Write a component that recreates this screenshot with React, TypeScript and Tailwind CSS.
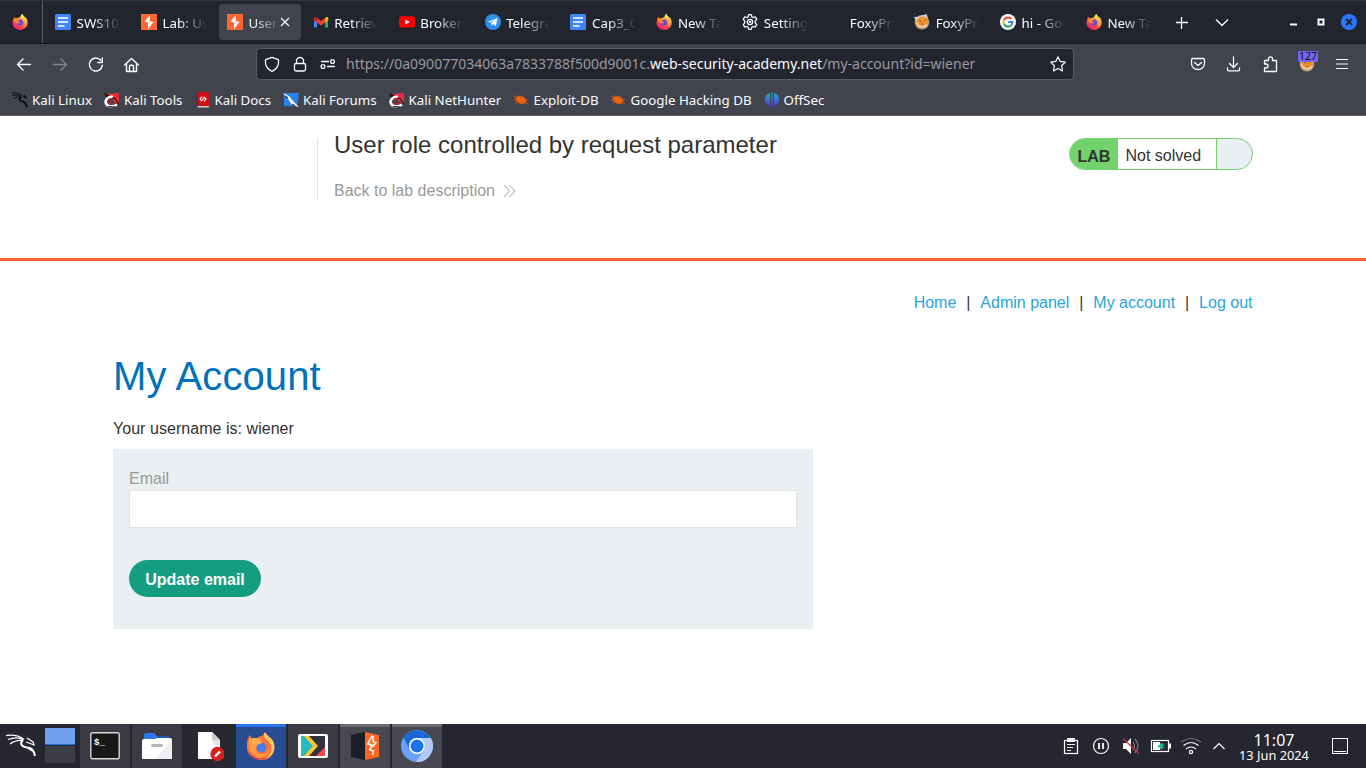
import React from "react";

type IconProps = { size?: number };

const Firefox = ({ size = 16 }: IconProps) => (
  <svg width={size} height={size} viewBox="0 0 32 32" className="shrink-0">
    <defs>
      <linearGradient id="ffBody" x1="0.85" y1="0.05" x2="0.2" y2="0.95">
        <stop offset="0" stopColor="#fff44f" />
        <stop offset="0.35" stopColor="#ffa436" />
        <stop offset="0.65" stopColor="#ff4a3f" />
        <stop offset="1" stopColor="#e81b80" />
      </linearGradient>
      <linearGradient id="ffFlame" x1="0.5" y1="0" x2="0.6" y2="1">
        <stop offset="0" stopColor="#fff44f" />
        <stop offset="1" stopColor="#ff8a1e" />
      </linearGradient>
    </defs>
    <path d="M5 5c0 2 1 3 1.500 4 2-1 4-1.500 6-1C14 6 16 6 17 6c0-3 2-5 4-6 0 3 3 4 5 7 1 0 1-1 1-1 3 4 5 8 4 14-1 7-8 12-15 12S1 26 1 18C1 12 3 8 5 5z" fill="url(#ffBody)" />
    <circle cx="16" cy="17" r="6.500" fill="#7a42d8" />
    <path d="M4 10c3-2 8-2 12 1 0 2-4 2-5 4 2 1 4 0 5 2-2 2-5 3-8 1-3-2-4-5-4-8z" fill="#ff8a2b" />
    <path d="M21 0c0 3 4 5 6 9 3 6 1 12-5 15 3-5 3-10-2-13-3-2-4-8 1-11z" fill="url(#ffFlame)" />
  </svg>
);

const FirefoxLauncher = () => (
  <svg width="30" height="30" viewBox="0 0 30 30">
    <path d="M4 4c1 2 1 3 2 4l5-1c1-1 2-2 5-2l3-4c1 3 6 5 8 9 4 9-1 19-11 19S0 22 1 14C1 9 2 6 4 4z" fill="#ff7043" />
    <path d="M19 1c1 4 6 5 8 9 4 9-1 16-7 18 6-5 8-13 2-18-4-3-5-6-3-9z" fill="#ffcb55" />
    <path d="M3 9c5-3 9-1 13-1l-4 5c-2 1-3 5-1 8 4 4 10 2 12-3 1 6-4 9-9 9S3 22 3 14z" fill="#ff9a43" />
    <circle cx="15.500" cy="16.500" r="5" fill="#477fe8" />
    <path d="M3 8c5-2 9 0 13 3-1 3-5 1-5 4-3-1-6-4-8-7z" fill="#ffad48" />
    <path d="M3 19c3 8 12 11 20 6-5 5-18 6-20-6z" fill="#e53945" />
  </svg>
);

const Docs = () => (
  <svg width="16" height="16" viewBox="0 0 16 16" className="shrink-0">
    <rect width="16" height="16" rx="1.500" fill="#4285f4" />
    <path d="M3 4h10M3 8h10M3 12h6.500" stroke="#fff" strokeWidth="1.700" />
  </svg>
);

const Burp = () => (
  <svg width="16" height="16" viewBox="0 0 16 16" className="shrink-0">
    <rect width="16" height="16" fill="#ff6633" />
    <path d="M9 1L3.500 7.700l3.700.8v-1.700l1.800-.6zM7 15l5.500-7-3.700-.9v1.900L7 9.700z" fill="#fff" />
    <path d="M8 6.500v3" stroke="#fff" strokeWidth="1.400" />
  </svg>
);

const Gmail = () => (
  <svg width="16" height="16" viewBox="0 0 16 16" className="shrink-0">
    <path d="M1 4v9.500h3V6z" fill="#4285f4" />
    <path d="M12 6v7.500h3V4z" fill="#34a853" />
    <path d="M12 4.200l1-1c1-.8 2.300 0 2.300 1.300V6L12 8.500z" fill="#fbbc04" />
    <path d="M4 8.500V4l4 3 4-3v4.500l-4 3z" fill="#ea4335" />
    <path d="M.7 4.500C.7 3.200 2 2.400 3 3.200l1 .8v4.500L.7 6z" fill="#c5221f" />
  </svg>
);

const YouTube = () => (
  <svg width="16" height="16" viewBox="0 0 16 16" className="shrink-0">
    <rect y="2.200" width="16" height="11.400" rx="2.600" fill="#f00" />
    <path d="M6.300 5.500v5l4.500-2.500z" fill="#fff" />
  </svg>
);

const Telegram = () => (
  <svg width="16" height="16" viewBox="0 0 16 16" className="shrink-0">
    <circle cx="8" cy="8" r="8" fill="#2f8fea" />
    <path d="M3 7.800L12.400 4l-1.500 8.200-3-2.200-1.500 1.500-.3-2.600 4-3.500-5 3.200z" fill="#fff" />
  </svg>
);

const Gear = () => (
  <svg width="16" height="16" viewBox="0 0 16 16" className="shrink-0" fill="none" stroke="#fbfbfe" strokeWidth="1.300" strokeLinejoin="round">
    <path d="M6.700.7h2.600l.6 2.200 1.100.6 2.200-.7 1.600 2.500-1.600 1.900v1.600l1.600 1.900-1.600 2.500-2.200-.7-1.100.6-.6 2.200H6.700l-.6-2.200-1.100-.6-2.200.7-1.600-2.500 1.600-1.900V7.200L1.200 5.300l1.600-2.500 2.200.7 1.100-.6z" />
    <circle cx="8" cy="8" r="2.600" />
    <circle cx="8" cy="8" r=".5" />
  </svg>
);

const Foxy = () => (
  <svg width="16" height="16" viewBox="0 0 16 16" className="shrink-0">
    <circle cx="8" cy="8.300" r="7.300" fill="#b9a18a" />
    <path d="M0 3l5-.5L12.500 0l1.500 4-5-1-7 4z" fill="#cfd0d2" />
    <circle cx="8.200" cy="8" r="5.600" fill="#f3922f" />
    <path d="M2.500 8c1 5 7 6.500 10.500 2.500" stroke="#f8dfc0" strokeWidth="1.200" fill="none" />
    <path d="M5 6.500l2.500.8M9.500 7.500L12 5M7 10h2" stroke="#9a5c2a" strokeWidth="1" />
  </svg>
);

const Google = () => (
  <svg width="16" height="16" viewBox="0 0 16 16" className="shrink-0" fill="none" strokeWidth="2.100">
    <circle cx="8" cy="8" r="8" fill="#fff" />
    <path d="M11.300 4.900A4.500 4.500 0 0 0 4 6" stroke="#ea4335" />
    <path d="M4 5.900a4.500 4.500 0 0 0 0 4.200" stroke="#fbbc05" />
    <path d="M4 10a4.500 4.500 0 0 0 7 1.500" stroke="#34a853" />
    <path d="M8 8h4.500a4.400 4.400 0 0 1-1.500 3.500" stroke="#4285f4" />
  </svg>
);

const Blank = () => <span className="size-4 shrink-0" />;

const tabs: { label: string; Icon: React.ComponentType; active?: boolean }[] = [
  { label: "SWS101", Icon: Docs },
  { label: "Lab: User", Icon: Burp },
  { label: "User role", Icon: Burp, active: true },
  { label: "Retrievin", Icon: Gmail },
  { label: "Broken a", Icon: YouTube },
  { label: "Telegram", Icon: Telegram },
  { label: "Cap3_Gro", Icon: Docs },
  { label: "New Tab", Icon: Firefox },
  { label: "Settings", Icon: Gear },
  { label: "FoxyProxy", Icon: Blank },
  { label: "FoxyProxy", Icon: Foxy },
  { label: "hi - Goog", Icon: Google },
  { label: "New Tab", Icon: Firefox },
];

function TabStrip() {
  return (
    <div className="flex h-11 items-center border-t border-t-[#32344a] border-b border-b-[#16171d] bg-[#23252e]">
      <div className="flex h-full w-[43px] items-center justify-center border-r border-[#5b5c63] pr-[3px]">
        <Firefox />
      </div>
      <div className="ml-0.5 flex">
        {tabs.map(({ label, Icon, active }, i) => (
          <div key={i} className="w-[85.920px] px-[2px]">
            <div className={active ? "flex h-9 items-center rounded bg-[#42444d] pl-2" : "flex h-9 items-center pl-2"}>
              <Icon />
              <span
                className={
                  active
                    ? "ml-[5.600px] w-[28.400px] overflow-hidden pt-[3px] whitespace-nowrap [mask-image:linear-gradient(to_right,black_20%,transparent_110%)]"
                    : "ml-[5.600px] w-[44px] overflow-hidden pt-[3px] whitespace-nowrap [mask-image:linear-gradient(to_right,black_35%,transparent)]"
                }
              >
                {label}
              </span>
              {active && (
                <svg width="10" height="10" viewBox="0 0 10 10" className="ml-[3px] shrink-0" stroke="#fbfbfe" strokeWidth="1.200">
                  <path d="M1 1l8 8M9 1L1 9" />
                </svg>
              )}
            </div>
          </div>
        ))}
      </div>
      <svg width="204" height="42" viewBox="1162 1 204 42" className="shrink-0" fill="none" stroke="#fbfbfe" strokeWidth="1.300">
        <path d="M1176 22.500h12M1181.500 17v12M1216 19.500l6 6 6-6" />
        <path d="M1290 24.500h7" strokeWidth="2" />
        <rect x="1318.500" y="19.500" width="5" height="5" strokeWidth="2" />
        <circle cx="1349" cy="22" r="8" fill="#2777ff" stroke="none" />
        <path d="M1346 19l6 6M1352 19l-6 6" stroke="#20242e" strokeWidth="2" />
      </svg>
    </div>
  );
}

function Toolbar() {
  return (
    <div className="flex h-10 items-center">
      <svg width="256" height="40" viewBox="0 44 256 40" fill="none" stroke="#fbfbfe" strokeWidth="1.400" strokeLinecap="round" strokeLinejoin="round">
        <path d="M30.500 64.500h-13M23 59l-5.500 5.500L23 70" />
        <path d="M53.500 64.500h13M61 59l5.500 5.500L61 70" stroke="#85868c" />
        <path d="M100.800 60.300a6.500 6.500 0 1 0 1.500 5M102.300 58v4.500h-4.500" />
        <path d="M124.500 65l7-6.500 7 6.500M126.500 63.500v8h10v-8M129.500 71v-4a2 2 0 0 1 4 0v4" />
      </svg>
      <div className="flex h-8 w-[818px] items-center rounded border border-[#5b5d66] bg-[#23252e]">
        <svg width="86" height="30" viewBox="257 49 86 30" fill="none" stroke="#fbfbfe" strokeWidth="1.300" strokeLinejoin="round">
          <path d="M272 57.300l6.500 2.300v3c0 4-2.500 7-6.500 8.700-4-1.700-6.500-4.700-6.500-8.700v-3z" />
          <rect x="294.500" y="63.500" width="11" height="7.500" rx="1.500" />
          <path d="M296.500 63.500V61a3.500 3.500 0 0 1 7 0v2.500M321 61.500h8M327 66.500h8" />
          <circle cx="332.500" cy="61.500" r="1.900" />
          <circle cx="323" cy="66.500" r="1.900" />
        </svg>
        <div className="w-[705px] pb-0.5 pl-[3px] text-[14px] whitespace-nowrap text-[#99999f]">
          https://0a090077034063a7833788f500d9001c.<span className="text-[#fbfbfe]">web-security-academy.net</span>/my-account?id=wiener
        </div>
        <svg width="18" height="18" viewBox="0 0 18 18" className="ml-px" fill="none" stroke="#fbfbfe" strokeWidth="1.200" strokeLinejoin="round">
          <path d="M9 1.700l2.200 4.700 5.100.7-3.700 3.600.9 5.200L9 13.400l-4.500 2.500.9-5.200L1.700 7.100l5.100-.7z" />
        </svg>
      </div>
      <svg width="212" height="40" viewBox="1074 44 212 40" className="shrink-0" fill="none" stroke="#fbfbfe" strokeWidth="1.300" strokeLinecap="round" strokeLinejoin="round">
        <path d="M1192.700 58.500h10.600q1.200 0 1.200 1.200v3.800a6.500 6 0 0 1-13 0v-3.800q0-1.200 1.200-1.200zM1194.500 62.500l3.500 3 3.500-3" />
        <path d="M1233.500 57v10M1229.500 63.500l4 4 4-4M1227.500 68v2q0 .8.800.800h10.400q.8 0 .8-.8v-2" />
        <path d="M1264.500 60.500h4v-1.700a2 2 0 0 1 4 0v1.700h4v11h-12v-3.500h1.500a2 2 0 0 0 0-4h-1.500z" />
      </svg>
      <div className="relative flex w-[40px] items-center justify-center pl-px">
        <Foxy />
        <span className="absolute top-[-5px] left-[12px] h-[11px] w-5 rounded-[1px] bg-[#7563ee] text-center text-[10.500px] leading-[11px] text-[#111]">127</span>
      </div>
      <svg width="12" height="12" viewBox="0 0 12 12" className="ml-[10px] shrink-0" stroke="#fbfbfe" strokeWidth="1.100">
        <path d="M0 1.500h12M0 6h12M0 10.500h12" />
      </svg>
    </div>
  );
}

const Dragon = () => (
  <svg width="16" height="16" viewBox="0 0 16 16" className="shrink-0" fill="none" stroke="#090a0c">
    <path d="M0 1c5-.5 8 .5 10.500 3l3.500 1M.5 3.500C4 2.500 7 3 9 4.500M2 7c2-2 4-2.500 7-2" strokeWidth=".9" />
    <path d="M9 4.500C6.500 7 7 9 10 9.300c3 .2 4 2 5 5.700" strokeWidth="1.800" />
    <path d="M12 3l3 3-3-.5" strokeWidth="1" />
  </svg>
);

const KaliRed = () => (
  <svg width="16" height="16" viewBox="0 0 16 16" className="shrink-0">
    <path d="M3 2l12-1v11l-4-2z" fill="#ee2b37" />
    <path d="M0 1l5 2 2 3-4 2z" fill="#15161b" />
    <path d="M9 5C4 4 .500 8 2 11.500c1.500 3.500 7 3.500 11 1" stroke="#fff" strokeWidth="2.600" fill="none" />
    <path d="M9.500 6.800C5 6 4 8.500 4.500 10.500c.8 2 4.500 2 7.500.3" stroke="#c9202e" strokeWidth="1.300" fill="none" />
    <path d="M8 6l3 .5 4 5.500M4 14.500l7 .5" stroke="#15161b" strokeWidth="1.200" fill="none" />
  </svg>
);

const KaliDocs = () => (
  <svg width="16" height="16" viewBox="0 0 16 16" className="shrink-0">
    <path d="M2 0h12v14H2z" fill="#cf0f14" />
    <path d="M1.500 1h1v14h-1z" fill="#27375f" />
    <path d="M2.500 14H14v1.500H2.500z" fill="#c9c9cb" />
    <path d="M7 4.500L5 7l2 2M9 5l2 2-2 2.500M7 8.500l2-3" stroke="#fff" strokeWidth="1.100" fill="none" />
  </svg>
);

const KaliForums = () => (
  <svg width="16" height="16" viewBox="0 0 16 16" className="shrink-0">
    <path d="M1 1h15l-2 13H1z" fill="#2581ec" />
    <path d="M0 1l6 3 5 6 5 5-7-2-4-6z" fill="#fff" />
    <path d="M2 4l3 2M9 12l3 2" stroke="#272b38" strokeWidth="1.200" />
  </svg>
);

const Bug = () => (
  <svg width="16" height="16" viewBox="0 0 16 16" className="shrink-0">
    <ellipse cx="8" cy="8" rx="5.600" ry="3.600" transform="rotate(20 8 8)" fill="#ed640e" />
    <path d="M1 4l4 2M5 3l3 3M10 4l1 3M12 7l3 1M11 10l4 2M7 10l3 2M4 9l-1 3M1 8h4" stroke="#c4560f" strokeWidth=".9" />
  </svg>
);

const OffSec = () => (
  <svg width="16" height="16" viewBox="0 0 16 16" className="shrink-0">
    <defs>
      <linearGradient id="osg" x1="0" y1="0" x2="0" y2="16" gradientUnits="userSpaceOnUse">
        <stop stopColor="#19b0b2" />
        <stop offset=".5" stopColor="#3b70d0" />
        <stop offset="1" stopColor="#5f1ff0" />
      </linearGradient>
    </defs>
    <path d="M6 1v13C-1 12-1 3 6 1zM10 1v13c7-2 7-11 0-13zM7.300.5h1.400v15H7.300z" fill="url(#osg)" />
  </svg>
);

function Bookmark({ Icon, label, className }: { Icon: React.ComponentType; label: string; className: string }) {
  return (
    <div className={`flex shrink-0 items-center whitespace-nowrap ${className}`}>
      <Icon />
      <span className="pt-px">{label}</span>
    </div>
  );
}

function Bookmarks() {
  return (
    <div className="flex h-8 items-center border-b border-[#5b5c65] pt-px pl-3">
      <Bookmark Icon={Dragon} label="Kali Linux" className="w-[92px] gap-1" />
      <Bookmark Icon={KaliRed} label="Kali Tools" className="w-[91px] gap-1" />
      <Bookmark Icon={KaliDocs} label="Kali Docs" className="w-[88px] gap-[3.500px]" />
      <Bookmark Icon={KaliForums} label="Kali Forums" className="w-[106px] gap-1" />
      <Bookmark Icon={KaliRed} label="Kali NetHunter" className="w-[124px] gap-[3.500px]" />
      <Bookmark Icon={Bug} label="Exploit-DB" className="w-[97px] gap-[4.500px]" />
      <Bookmark Icon={Bug} label="Google Hacking DB" className="w-[154px] gap-[4.500px]" />
      <Bookmark Icon={OffSec} label="OffSec" className="gap-[3.500px]" />
    </div>
  );
}

function LabPage() {
  return (
    <main className="h-[608px] bg-white font-['Liberation_Sans',sans-serif] text-base text-[#333332]">
      <header className="flex h-[145px] justify-between border-b-[3px] border-[#ff6633] pt-[22px] pr-[113px] pl-[317px]">
        <div className="h-[62px] border-l border-[#e3e3e3] pl-4">
          <h2 className="-mt-2 text-[24px] leading-[30px]">User role controlled by request parameter</h2>
          <div className="mt-[21px] flex items-center leading-5 text-[#999]">
            Back to lab description
            <svg width="14" height="14" viewBox="0 0 14 14" className="ml-2" fill="none" stroke="#999" strokeWidth=".9">
              <path d="M1 1l5.500 6L1 13M6.500 1L12 7l-5.500 6" />
            </svg>
          </div>
        </div>
        <div className="flex h-8 w-[184px] overflow-hidden rounded-full border border-[#72d36d] bg-[#e9eff2]">
          <span className="w-12 bg-[#72d36d] pl-[7.500px] font-bold leading-[36px]">LAB</span>
          <span className="w-[99px] border-r border-[#72d36d] bg-white pl-[7.500px] leading-[34px]">Not solved</span>
        </div>
      </header>
      <nav className="flex justify-end pt-8 pr-[113.500px] leading-5 whitespace-pre text-[#29a5dc]">
        <a>Home</a>
        <span className="w-6 text-center text-[#333332]">|</span>
        <a>Admin panel</a>
        <span className="w-6 text-center text-[#333332]">|</span>
        <a>My account</a>
        <span className="w-6 text-center text-[#333332]">|</span>
        <a>Log out</a>
      </nav>
      <section className="pt-[39px] pl-[113px]">
        <h1 className="text-[40px] leading-[48px] tracking-[0.1px] text-[#0071bc]">My Account</h1>
        <p className="mt-[19px] leading-5 tracking-[0.040px]">Your username is: wiener</p>
        <form className="mt-[10px] h-[180px] w-[700px] bg-[#eaeff2] px-4 pt-5" onSubmit={(e) => e.preventDefault()}>
          <label className="block h-[21px] leading-5 text-[#999]" htmlFor="email">Email</label>
          <input id="email" className="block h-[38px] w-full border border-[#dfe3e5] bg-white px-2 outline-none" />
          <button className="mt-8 h-[37px] w-[132px] rounded-full bg-[#159d82] pt-0.5 font-bold text-white">Update email</button>
        </form>
      </section>
    </main>
  );
}

function TaskButton({ children, className }: { children: React.ReactNode; className: string }) {
  return <div className={`mr-0.5 flex h-11 w-[50px] shrink-0 items-center justify-center border-t-[3px] pb-[3px] ${className}`}>{children}</div>;
}

function Taskbar() {
  return (
    <footer className="flex h-11 bg-[#25262f] text-[#fcfcfc]">
      <svg width="45" height="44" viewBox="0 724 45 44" fill="none" stroke="#fff" strokeWidth="1.300">
        <path d="M6 735.500c8-1 13 0 18 4M8 739.500c5-2 11-2 15 0M10 744c4-3 8-4 13-3.500" />
        <path d="M23 740c-4 4-1 7 4 7.500 5 0 7 3 8 8.500M28 748l5 3" strokeWidth="2" />
        <path d="M27 738l6 4 1 3-5-2-3-1" strokeWidth="1.200" />
      </svg>
      <div className="mr-[5px] flex w-[30px] flex-col gap-[1px] pt-1">
        <div className="h-[17px] border-b border-[#2771df] bg-[#709fef]" />
        <div className="h-[17px] bg-[#3b3c45]" />
      </div>
      <TaskButton className="border-[#393a42] bg-[#393a42]">
        <svg width="30" height="28" viewBox="0 0 30 28">
          <rect x=".8" y=".8" width="28.400" height="26" rx="1.500" fill="#181818" stroke="#d6d6d6" strokeWidth="1.400" />
          <text x="4" y="12.500" fill="#fff" fontSize="9" fontWeight="bold" fontFamily="Liberation Mono, monospace">$_</text>
        </svg>
      </TaskButton>
      <TaskButton className="border-[#393a42] bg-[#393a42]">
        <svg width="30" height="28" viewBox="0 0 30 28">
          <path d="M2 3q0-2 2-2h8l3 3h13v8H2z" fill="#2f78f2" />
          <path d="M14 6l2-2h12v4H14z" fill="#1e56b5" />
          <path d="M0 9q0-2 2-2h11l2-1h13q2 0 2 2v19H0z" fill="#fff" />
          <path d="M30 8v19H13z" fill="#eee" />
          <rect x="9" y="12" width="12" height="3" rx="1.500" fill="#b5b5b5" />
        </svg>
      </TaskButton>
      <TaskButton className="border-[#272830] bg-[#272830]">
        <svg width="30" height="32" viewBox="0 0 30 32">
          <path d="M4 2h14l8 8v19H4z" fill="#fff" />
          <path d="M18 2v8h8z" fill="#ccc" />
          <path d="M26 10v12l-8-12z" fill="#e6e6e6" />
          <circle cx="23.500" cy="24" r="7.200" fill="#d81f20" />
          <path d="M21 26.500l5-5" stroke="#fff" strokeWidth="2.400" />
        </svg>
      </TaskButton>
      <TaskButton className="border-[#2675ef] bg-[#274c91]">
        <FirefoxLauncher />
      </TaskButton>
      <TaskButton className="border-[#393a42] bg-[#393a42]">
        <svg width="30" height="24" viewBox="0 0 30 24">
          <rect width="30" height="24" rx="2" fill="#fff" />
          <path d="M3 2h24v20H3z" fill="#30333f" />
          <path d="M3 2h5l8 10-8 10H3z" fill="#25b9c1" />
          <path d="M6 2h5l9 10-9 10H6l9-10z" fill="#ffc62c" />
          <path d="M27 13v9h-9z" fill="#ff4648" />
        </svg>
      </TaskButton>
      <TaskButton className="border-[#6a6b70] bg-[#474850]">
        <svg width="30" height="30" viewBox="0 0 30 30">
          <path d="M1 4l14-3v28L1 26z" fill="#1b1e27" />
          <path d="M15 1l14 3v22l-14 3z" fill="#ff6720" />
          <path d="M22.500 4L17.500 13l5 1.500-3 4 4 1.500-1 4M23 5v5.500l3 1-3.500 4.500M17.500 13l4 .5" fill="none" stroke="#fff" strokeWidth="1.400" />
        </svg>
      </TaskButton>
      <TaskButton className="border-[#6a6b70] bg-[#474850]">
        <svg width="32" height="32" viewBox="0 0 32 32">
          <circle cx="16" cy="16" r="16" fill="#6ba1f8" />
          <path d="M2.500 7.500A16 16 0 0 1 29.500 8H16a8 8 0 0 0-7 12z" fill="#1967d2" />
          <path d="M29.800 8A16 16 0 0 1 15 32l8-12a8 8 0 0 0-7-12z" fill="#aecbfa" />
          <circle cx="16" cy="16" r="8" fill="#fff" />
          <circle cx="16" cy="16" r="6.500" fill="#1a73e8" />
        </svg>
      </TaskButton>
      <svg width="176" height="44" viewBox="1060 724 176 44" className="ml-auto shrink-0" fill="none" stroke="#fcfcfc" strokeWidth="1.200">
        <rect x="1064.500" y="740.500" width="13" height="13" />
        <path d="M1067 738h8v4h-8z" fill="#fcfcfc" stroke="none" />
        <path d="M1067 744.500h8M1067 747.500h6M1067 750.500h4" />
        <circle cx="1101" cy="746" r="7.500" />
        <path d="M1099 743v6M1103 743v6" strokeWidth="1.800" />
        <path d="M1123 743h3l5-5v16l-5-5h-3z" fill="#fcfcfc" stroke="none" />
        <path d="M1133 742q3 4 0 8M1135 739q6 7 0 14" stroke="#777880" />
        <path d="M1123 738.500l16 15" stroke="#d92d35" />
        <rect x="1151.500" y="740.500" width="17" height="11" />
        <path d="M1153 742h7v8h-7z" fill="#fcfcfc" stroke="none" />
        <path d="M1169 743.500h2v5h-2z" fill="#fcfcfc" stroke="none" />
        <path d="M1158 745.300h1.500l1.500-2.300h1.500v1.500h2v1h-2v1.500h2v1h-2v1.500H1161l-1.500-2.300H1158z" fill="#1dbd99" stroke="none" />
        <circle cx="1191" cy="752" r="1.600" />
        <path d="M1186 749q5-4 10 0M1183.500 745.500q7.500-6 15 0" />
        <path d="M1181 742q10-7 20 0" stroke="#777880" />
        <path d="M1213.500 749l5.500-5.500 5.500 5.500" />
      </svg>
      <div className="flex w-[76px] flex-col items-center pt-2 whitespace-nowrap">
        <span className="text-[16px] leading-[16px]">11:07</span>
        <span className="text-[12.800px] leading-[14px]">13 Jun 2024</span>
      </div>
      <svg width="54" height="44" viewBox="1312 724 54 44" className="shrink-0" fill="none" stroke="#fcfcfc">
        <rect x="1332.500" y="738.500" width="15" height="15" />
        <path d="M1334 751.500h12" />
      </svg>
    </footer>
  );
}

export default function App() {
  return (
    <div className="flex h-[768px] w-[1366px] flex-col overflow-hidden bg-[#42444d] font-['Noto_Sans',sans-serif] text-[13.330px] text-[#fbfbfe]">
      <TabStrip />
      <Toolbar />
      <Bookmarks />
      <LabPage />
      <Taskbar />
    </div>
  );
}
